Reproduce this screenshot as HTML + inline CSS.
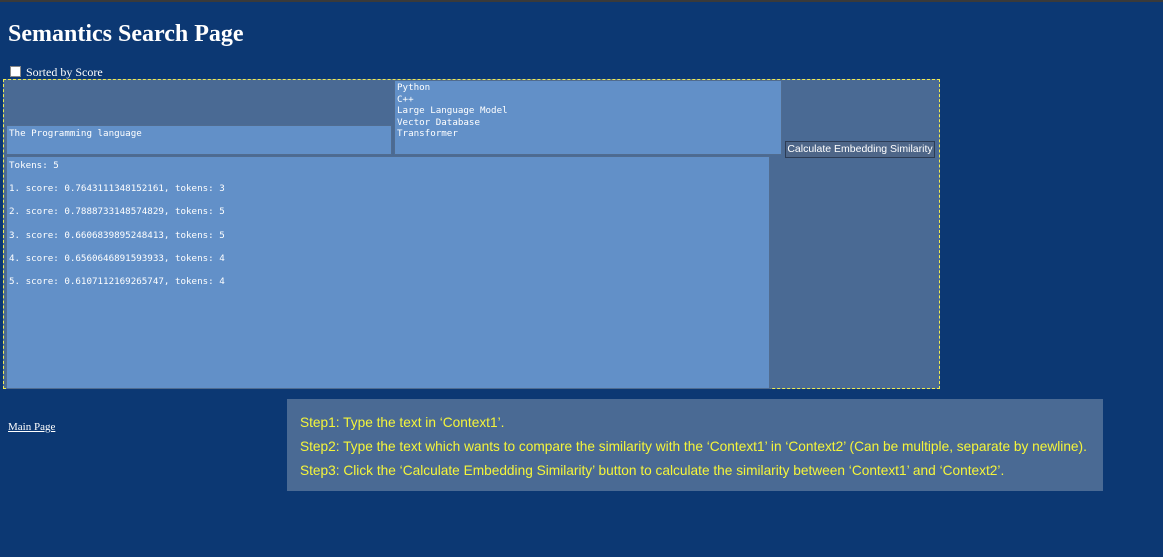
<!DOCTYPE html>
<html><head><meta charset="utf-8"><style>
html,body{margin:0;padding:0;}
body{width:1163px;height:557px;background:#0c3873;position:relative;overflow:hidden;font-family:"Liberation Serif",serif;border-top:2px solid #3a3a3a;box-sizing:border-box;}
h1{position:absolute;left:8px;top:19px;margin:0;font-size:24px;color:#fff;font-weight:bold;}
.cb{position:absolute;left:10px;top:64px;width:9px;height:9px;background:#fff;border:1px solid #888;}
.sl{position:absolute;left:26px;top:63px;color:#fff;font-size:12px;}
.box{position:absolute;left:3px;top:77px;width:935px;height:308px;background:#4a6a94;border:1px dashed #f0ec50;}
.ta{position:absolute;background:#6290c8;border:1px solid #506c90;box-sizing:border-box;color:#fff;font-family:"DejaVu Sans Mono","Liberation Mono",monospace;font-size:9.2px;line-height:11.5px;padding:1px 2px;white-space:pre;overflow:hidden;}
.btn{position:absolute;left:785px;top:139px;width:150px;height:17px;box-sizing:border-box;background:#4e6688;border:1px solid #2c3c55;color:#fff;font-family:"Liberation Sans",sans-serif;font-size:10.5px;line-height:15px;text-align:center;}
.mp{position:absolute;left:8px;top:419px;color:#fff;font-size:11px;text-decoration:underline;}
.steps{position:absolute;left:287px;top:397px;width:816px;height:92px;background:#4a6a94;color:#f5f53a;font-family:"Liberation Sans",sans-serif;font-size:13.7px;}
.steps p{position:absolute;left:13px;margin:0;white-space:nowrap;}
</style></head><body>
<h1>Semantics Search Page</h1>
<div class="cb"></div><div class="sl">Sorted by Score</div>
<div class="box"></div>
<div class="ta" style="left:6px;top:123px;width:386px;height:30px;padding-top:2px;">The Programming language</div>
<div class="ta" style="left:394px;top:78px;width:388px;height:75px;">Python
C++
Large Language Model
Vector Database
Transformer</div>
<div class="btn">Calculate Embedding Similarity</div>
<div class="ta" style="left:6px;top:154px;width:764px;height:233px;line-height:11.6px;padding-top:3px;">Tokens: 5

1. score: 0.7643111348152161, tokens: 3

2. score: 0.7888733148574829, tokens: 5

3. score: 0.6606839895248413, tokens: 5

4. score: 0.6560646891593933, tokens: 4

5. score: 0.6107112169265747, tokens: 4</div>
<div class="mp">Main Page</div>
<div class="steps">
<p style="top:16px">Step1: Type the text in ‘Context1’.</p>
<p style="top:40px">Step2: Type the text which wants to compare the similarity with the ‘Context1’ in ‘Context2’ (Can be multiple, separate by newline).</p>
<p style="top:64px">Step3: Click the ‘Calculate Embedding Similarity’ button to calculate the similarity between ‘Context1’ and ‘Context2’.</p>
</div>
</body></html>
